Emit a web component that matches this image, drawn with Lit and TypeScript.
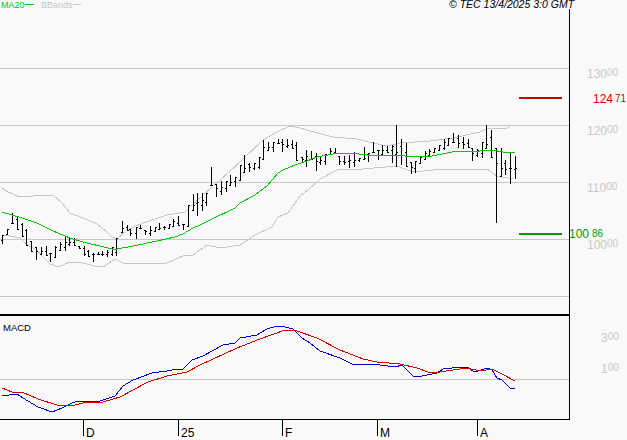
import { LitElement, html, css, svg } from "lit";
import { customElement } from "lit/decorators.js";

const BARS: [number, number, number][] = [
[2,235,244],[7,229,235],[12,213,224],[17,217,230],[22,223,237],[26,229,246],[31,241,252],[36,247,260],[41,247,255],[46,246,256],
[50,253,262],[55,246,258],[60,242,251],[65,237,251],[69,238,246],[74,238,246],[79,246,249],[84,246,256],[88,250,257],[93,253,262],
[98,252,255],[102,251,256],[107,250,257],[112,247,256],[116,238,256],[122,221,233],[127,225,231],[130,229,236],[136,227,239],[140,225,229],
[145,230,235],[150,226,236],[155,227,232],[159,223,230],[164,226,230],[169,224,229],[173,219,227],[178,216,226],[183,224,230],[188,205,227],
[193,194,211],[197,193,216],[202,193,211],[206,193,206],[211,167,186],[216,184,197],[221,181,195],[226,181,192],[230,175,186],[235,177,187],
[240,165,181],[244,155,173],[249,163,172],[254,163,170],[259,157,169],[263,140,160],[268,142,151],[273,142,152],[278,139,144],[282,139,152],
[287,139,148],[292,140,149],[296,142,161],[302,157,163],[306,150,167],[311,151,160],[316,153,171],[320,156,165],[325,154,165],[330,148,155],
[335,148,154],[339,156,165],[344,156,165],[349,155,168],[354,152,167],[359,158,162],[364,147,160],[368,153,162],[373,142,153],[378,150,160],
[382,145,155],[387,146,153],[392,145,163],[396,125,167],[401,139,165],[406,143,167],[411,162,174],[415,161,173],[420,157,164],[425,151,160],
[429,149,156],[434,148,153],[439,145,151],[444,139,150],[448,138,146],[453,133,143],[458,135,148],[463,137,149],[468,139,148],[472,148,161],
[477,149,157],[482,142,158],[486,125,149],[491,130,158],[496,148,223],[501,148,177],[505,160,175],[510,153,184],[515,156,179],
];

const MA = "2,212 22,218 37,223 53,231 70,238 83,242 108,248 112,249 117,249 133,246 157,241 175,237 183,234 193,228 200,225 210,220 235,208 240,203 255,195 267,186 278,173 283,170 295,165 307,161 317,157 333,154 350,153 367,155 400,155 410,157 432,156 442,154 452,152 467,151 480,151 492,150 503,152 515,153";
const UPPER = "2,188 8,192 20,197 33,196 53,195 62,203 70,213 83,218 97,224 107,232 112,237 117,239 127,230 143,223 167,215 185,212 192,205 212,187 228,173 243,159 263,140 277,132 290,126 300,128 317,133 333,137 357,139 373,143 387,146 400,143 430,141 453,138 480,132 488,128 507,128 512,125";
const LOWER = "2,235 10,236 20,238 27,245 37,250 43,257 50,264 58,267 70,262 83,263 95,266 103,267 115,259 125,264 143,263 167,263 185,255 193,255 200,250 207,245 220,248 240,245 255,235 272,227 278,217 288,213 300,196 308,190 320,179 337,170 363,169 397,166 413,172 443,169 487,169 497,176 513,179";
const BLUE = "2,396 17,394 23,398 38,407 52,412 62,408 72,403 78,401 97,402 115,396 123,386 133,380 152,373 167,371 177,369 183,369 192,360 203,356 212,351 223,345 235,343 240,338 257,335 267,329 277,326 285,327 293,329 302,338 310,343 320,351 340,358 352,364 380,365 395,367 402,365 413,376 422,376 437,373 443,369 452,368 467,367 473,371 478,371 487,368 492,370 497,378 502,380 511,389 515,388";
const RED = "2,388 12,392 22,392 38,399 57,405 75,405 83,403 103,402 120,397 133,390 148,382 167,376 187,372 200,365 237,348 260,339 285,330 297,331 317,338 340,350 363,359 377,362 400,364 417,368 428,372 440,372 453,370 467,368 480,371 492,369 502,374 515,381";

const clamp = (v: number, a: number, b: number) => Math.min(b, Math.max(a, v));
const mid = (b: [number, number, number]) => (b[1] + b[2]) / 2;

function barPath(): string {
  return BARS.map((b, i) => {
    const [x, t, h] = b;
    const o = Math.round(clamp(mid(BARS[Math.max(0, i - 1)]), t, h - 1)) + 0.5;
    const c = Math.round(clamp(mid(BARS[Math.min(BARS.length - 1, i + 1)]), t, h - 1)) + 0.5;
    return `M${x + 0.5} ${t}V${h}M${x - 1} ${o}H${x}M${x + 1} ${c}H${x + 2}`;
  }).join("");
}

const GRID = [68, 125, 182, 239, 296, 379];
const TICKS: [number, string][] = [[83, "D"], [178, "25"], [282, "F"], [377, "M"], [477, "A"]];
const PRICE: [string, string, number][] = [["130", "00", 78], ["120", "00", 135], ["110", "00", 192], ["100", "00", 249]];
const MACD: [string, string, number][] = [["3", "00", 342], ["1", "00", 373]];

@customElement("app-root")
export class AppRoot extends LitElement {
  static styles = css`
    :host { display: block; width: 627px; height: 440px; background: #f9f9f9; overflow: hidden; }
    svg { display: block; font-family: "Liberation Sans", Arial, sans-serif; }
    .crisp { shape-rendering: crispEdges; fill: none; }
    .grid { stroke: #c8c8c8; }
    .axis { stroke: #000; }
    .heavy { stroke: #000; stroke-width: 2; }
    .band { stroke: #c8c8c8; }
    .ma { stroke: #00c800; stroke-width: 1; }
    .bars { stroke: #000; }
    .blue { stroke: #0000cc; }
    .redl { stroke: #cc0000; stroke-width: 1; }
    .tgt-r { stroke: #cc0000; stroke-width: 2; }
    .tgt-g { stroke: #009900; stroke-width: 2; }
    .lg { font-size: 12px; }
    .sm { font-size: 10px; }
    .axt { fill: #c8c8c8; }
    .rt { fill: #cc0000; }
    .gt { fill: #009900; }
    .k { fill: #000; }
    .ma-t { fill: #00c800; font-size: 9px; }
    .bb-t { fill: #c8c8c8; font-size: 9px; }
    .stamp { fill: #000; font-size: 10.5px; font-style: italic; }
    .macd { fill: #000; font-size: 9.5px; }
  `;

  render() {
    return html`<svg width="627" height="440" viewBox="0 0 627 440">
      <g class="crisp">
        ${GRID.map((y) => svg`<line class="grid" x1="0" x2="569" y1=${y + 0.5} y2=${y + 0.5}></line>`)}
        <polyline class="band" points=${UPPER}></polyline>
        <polyline class="band" points=${LOWER}></polyline>
        <path class="bars" d=${barPath()}></path>
        <polyline class="ma" points=${MA}></polyline>
        <polyline class="blue" points=${BLUE}></polyline>
        <polyline class="redl" points=${RED}></polyline>
        <line class="axis" x1="569.5" x2="569.5" y1="9" y2="420"></line>
        <line class="heavy" x1="0" x2="570" y1="315" y2="315"></line>
        <line class="axis" x1="0" x2="570" y1="419.5" y2="419.5"></line>
        ${TICKS.map(([x]) => svg`<line class="axis" x1=${x + 0.5} x2=${x + 0.5} y1="419" y2="436"></line>`)}
        <line class="tgt-r" x1="519" x2="562" y1="98" y2="98"></line>
        <line class="tgt-g" x1="519" x2="562" y1="234" y2="234"></line>
        <line class="ma" x1="25" x2="34" y1="4.5" y2="4.5"></line>
        <line class="band" x1="73" x2="81" y1="4.5" y2="4.5"></line>
      </g>
      <text class="ma-t" x="1" y="8">MA20</text>
      <text class="bb-t" x="41" y="8">BBands</text>
      <text class="stamp" x="449" y="8">© TEC 13/4/2025 3:0 GMT</text>
      <text class="macd" x="3" y="331">MACD</text>
      ${PRICE.map(([a, b, y]) => svg`<text class="axt" x="587" y=${y}><tspan class="lg">${a}</tspan><tspan class="sm" dy="-2">${b}</tspan></text>`)}
      ${MACD.map(([a, b, y]) => svg`<text class="axt" x="601" y=${y}><tspan class="lg">${a}</tspan><tspan class="sm" dy="-2">${b}</tspan></text>`)}
      <text class="rt" x="593" y="103"><tspan class="lg">124</tspan><tspan class="sm" dx="2" dy="-1">71</tspan></text>
      <text class="gt" x="569" y="238"><tspan class="lg">100</tspan><tspan class="sm" dx="3" dy="-1">86</tspan></text>
      ${TICKS.map(([x, t]) => svg`<text class="k lg" x=${x + 3} y="437">${t}</text>`)}
    </svg>`;
  }
}
